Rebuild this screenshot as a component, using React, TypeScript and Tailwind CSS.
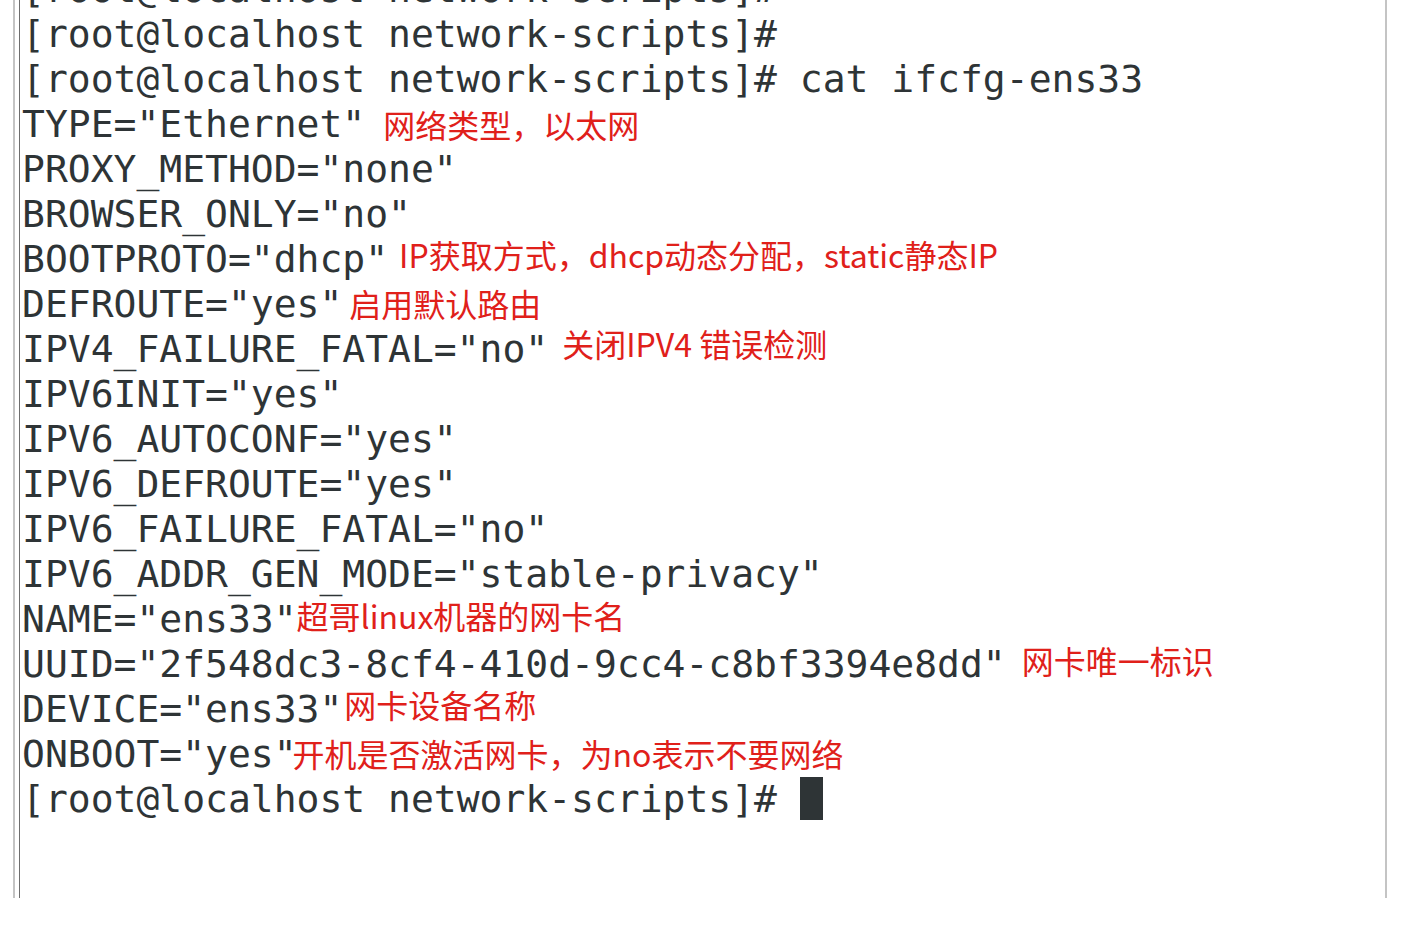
import React from "react";

type Line = { t: string; a?: string; ml?: number; dy?: number };

const lines: Line[] = [
  { t: "[root@localhost network-scripts]#" },
  { t: "[root@localhost network-scripts]#" },
  { t: "[root@localhost network-scripts]# cat ifcfg-ens33" },
  { t: 'TYPE="Ethernet"', a: "网络类型，以太网", ml: 18, dy: 0 },
  { t: 'PROXY_METHOD="none"' },
  { t: 'BROWSER_ONLY="no"' },
  { t: 'BOOTPROTO="dhcp"', a: "IP获取方式，dhcp动态分配，static静态IP", ml: 11, dy: -5 },
  { t: 'DEFROUTE="yes"', a: "启用默认路由", ml: 7, dy: -1 },
  { t: 'IPV4_FAILURE_FATAL="no"', a: "关闭IPV4 错误检测", ml: 14, dy: -6 },
  { t: 'IPV6INIT="yes"' },
  { t: 'IPV6_AUTOCONF="yes"' },
  { t: 'IPV6_DEFROUTE="yes"' },
  { t: 'IPV6_FAILURE_FATAL="no"' },
  { t: 'IPV6_ADDR_GEN_MODE="stable-privacy"' },
  { t: 'NAME="ens33"', a: "超哥linux机器的网卡名", ml: 0, dy: -4 },
  { t: 'UUID="2f548dc3-8cf4-410d-9cc4-c8bf3394e8dd"', a: "网卡唯一标识", ml: 16, dy: -4 },
  { t: 'DEVICE="ens33"', a: "网卡设备名称", ml: 2, dy: -5 },
  { t: 'ONBOOT="yes"', a: "开机是否激活网卡，为no表示不要网络", ml: -4, dy: -1 },
];

export default function App() {
  return (
    <div className="h-[932px] w-[1414px] bg-white overflow-hidden">
      <div className="ml-[13px] w-[1374px] h-[898px] border-l-2 border-r-2 border-[#c4c4c4] overflow-hidden">
        <div className="ml-[4px] h-full border-l border-[#6e6e6e] pl-[2px] flex flex-col overflow-hidden">
          <div
            className="mt-[-33px] text-[38px] leading-[45px] text-[#2e3436]"
            style={{ fontFamily: '"DejaVu Sans Mono", monospace' }}
          >
            {lines.map((l, i) => (
              <div key={i} className="h-[45px] whitespace-pre">
                {l.t}
                {l.a && (
                  <span
                    className="text-[32px] text-[#e0201a] inline-block leading-[45px] align-top"
                    style={{
                      fontFamily: '"Noto Sans CJK SC", "Noto Sans", sans-serif',
                      marginLeft: `${l.ml}px`,
                      transform: `translateY(${l.dy}px)`,
                    }}
                  >
                    {l.a}
                  </span>
                )}
              </div>
            ))}
            <div className="h-[45px] whitespace-pre">
              {"[root@localhost network-scripts]# "}
              <span className="inline-block w-[23px] h-[43px] bg-[#2e3436] align-top" />
            </div>
          </div>
        </div>
      </div>
    </div>
  );
}
